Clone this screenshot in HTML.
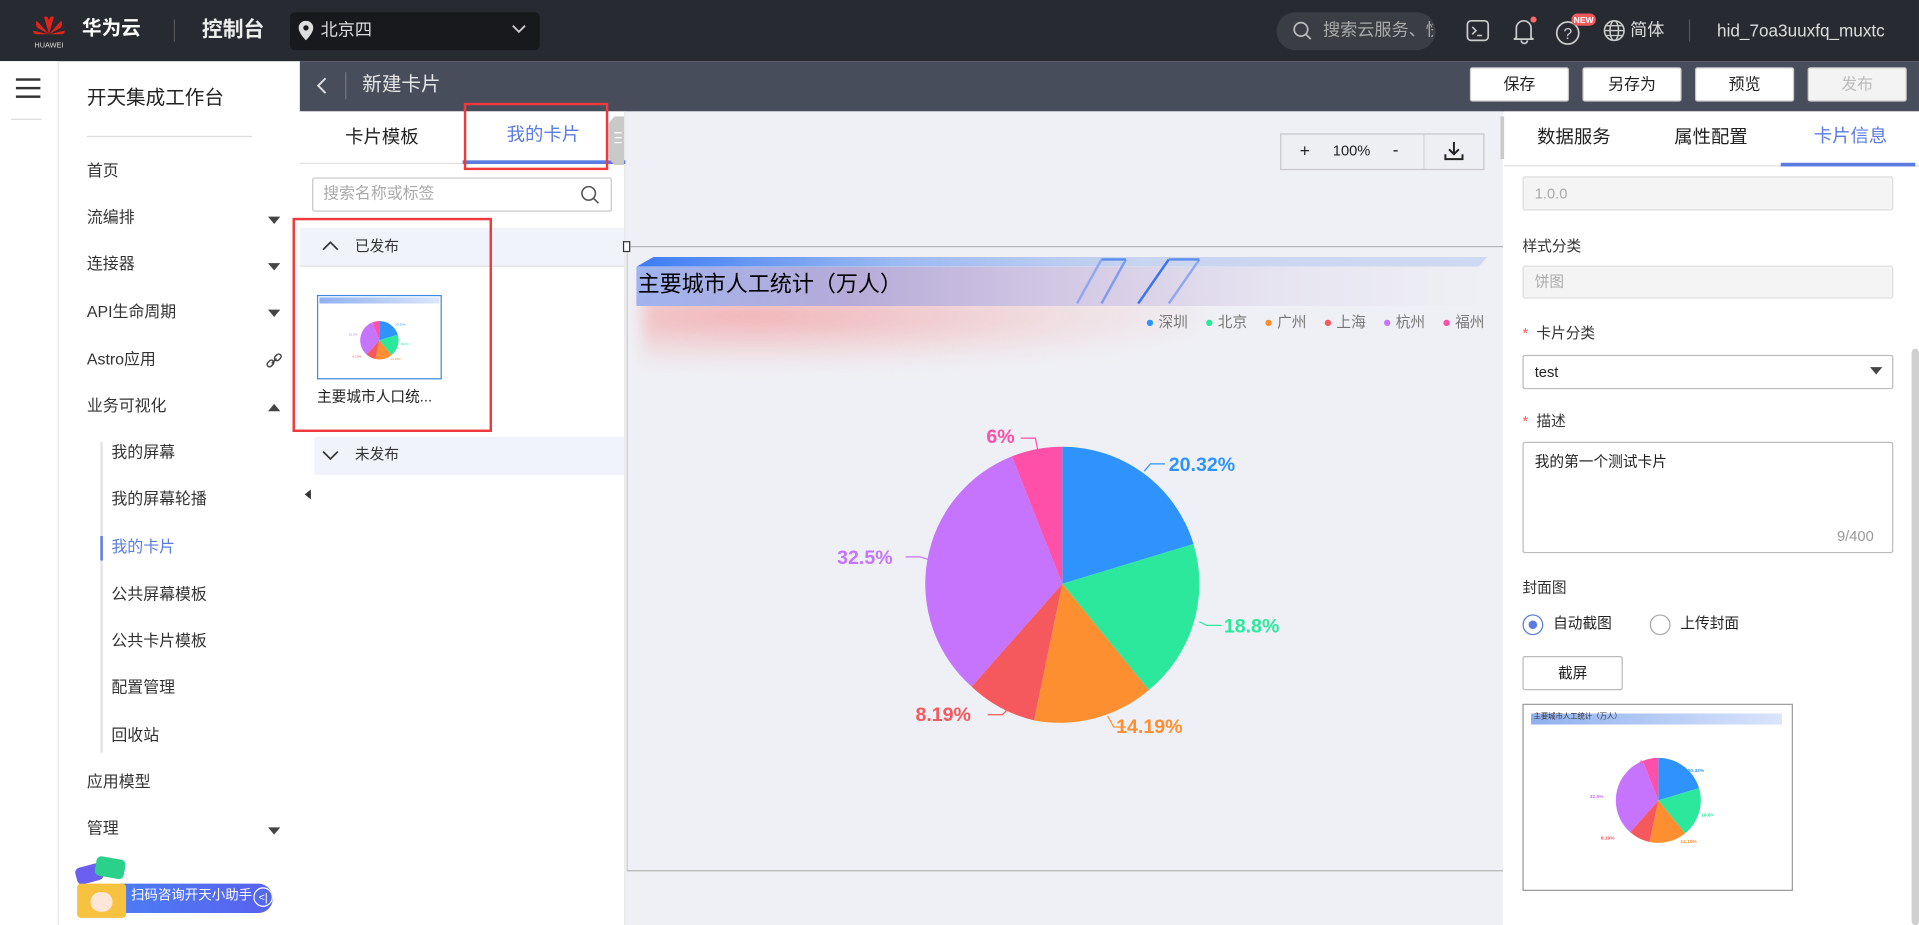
<!DOCTYPE html>
<html><head><meta charset="utf-8">
<style>
*{margin:0;padding:0;box-sizing:border-box}
html,body{width:1919px;height:925px;overflow:hidden;background:#fff}
body{font-family:"Liberation Sans","Noto Sans CJK SC",sans-serif;color:#333;line-height:1.15}
#s{position:absolute;left:0;top:0;width:1568px;height:756px;transform:scale(1.22385);transform-origin:0 0;overflow:hidden}
.a{position:absolute}
.t{position:absolute;white-space:nowrap}
.btn{position:absolute;top:55px;width:81px;height:28px;background:#fff;border:1px solid #ccc;border-radius:2px;font-size:13px;text-align:center;line-height:26px;color:#222}
.mi{position:absolute;left:71px;font-size:13px;color:#333;top:0}
.si{position:absolute;left:91px;font-size:13px;color:#333}
.arr{position:absolute;left:219px;width:0;height:0;border-left:5px solid transparent;border-right:5px solid transparent;border-top:6px solid #444}
.lbl{position:absolute;left:1244px;font-size:12px;color:#333}
.inp{position:absolute;left:1244px;width:303px;border:1px solid #ccc;border-radius:2px;font-size:12px;padding-left:9px}
</style></head><body>
<div id="s">
<!-- header -->
<div class="a" style="left:0;top:0;width:1568px;height:50px;background:#272a31"></div>
<svg class="a" style="left:25px;top:11px" width="30" height="30" viewBox="0 0 30 30">
<g fill="#e2231a"><path d="M15 17 L11 3 Q14 1 15 6Z"/><path d="M15 17 L19 3 Q16 1 15 6Z"/><path d="M15 17 L5 6 Q3 9 6 12Z"/><path d="M15 17 L25 6 Q27 9 24 12Z"/><path d="M15 17 L2 14 Q2 17 5 17Z"/><path d="M15 17 L28 14 Q28 17 25 17Z"/></g>
<text x="15" y="28" fill="#ddd" font-size="6" text-anchor="middle" font-family="Liberation Sans">HUAWEI</text></svg>
<div class="t" style="left:67px;top:15px;font-size:16px;font-weight:bold;color:#fff">华为云</div>
<div class="a" style="left:142px;top:16px;width:1px;height:18px;background:#555"></div>
<div class="t" style="left:165px;top:15px;font-size:17px;font-weight:bold;color:#eee">控制台</div>
<div class="a" style="left:237px;top:10px;width:204px;height:31px;background:#18191c;border-radius:4px"></div>
<svg class="a" style="left:244px;top:17px" width="12" height="16" viewBox="0 0 12 16"><path d="M6 0C2.7 0 0 2.6 0 5.8 0 10 6 16 6 16s6-6 6-10.2C12 2.6 9.3 0 6 0zm0 8a2.2 2.2 0 110-4.4A2.2 2.2 0 016 8z" fill="#ddd"/></svg>
<div class="t" style="left:262px;top:16px;font-size:14px;color:#ddd">北京四</div>
<svg class="a" style="left:418px;top:20px" width="12" height="8"><path d="M1 1l5 5 5-5" stroke="#ccc" stroke-width="1.5" fill="none"/></svg>
<div class="a" style="left:1043px;top:10px;width:130px;height:31px;background:#3a3d44;border-radius:16px"></div>
<svg class="a" style="left:1056px;top:17px" width="16" height="16"><circle cx="7" cy="7" r="5.5" stroke="#bbb" stroke-width="1.4" fill="none"/><path d="M11 11l4 4" stroke="#bbb" stroke-width="1.4"/></svg>
<div class="t" style="left:1081px;top:16px;font-size:14px;color:#aaa;width:90px;overflow:hidden">搜索云服务、快</div>
<svg class="a" style="left:1198px;top:15px" width="20" height="20"><rect x="1" y="2" width="17" height="16" rx="3" stroke="#ccc" stroke-width="1.4" fill="none"/><path d="M5 7l3 3-3 3M9 14h4" stroke="#ccc" stroke-width="1.3" fill="none"/></svg>
<svg class="a" style="left:1235px;top:12px" width="22" height="26"><path d="M4 19V11a6 6 0 0112 0v8l2 1H2z M8 21a2.5 2.5 0 005 0" stroke="#ccc" stroke-width="1.4" fill="none"/><circle cx="18" cy="4" r="2.5" fill="#f66"/></svg>
<svg class="a" style="left:1270px;top:11px" width="36" height="30"><circle cx="11" cy="16" r="9" stroke="#ccc" stroke-width="1.4" fill="none"/><text x="11" y="21" fill="#ccc" font-size="13" text-anchor="middle" font-family="Liberation Sans">?</text><rect x="14" y="0" width="20" height="10" rx="5" fill="#f25a5a"/><text x="24" y="8" fill="#fff" font-size="7" font-weight="bold" text-anchor="middle" font-family="Liberation Sans">NEW</text></svg>
<svg class="a" style="left:1309px;top:15px" width="20" height="20"><circle cx="10" cy="10" r="8" stroke="#ccc" stroke-width="1.3" fill="none"/><ellipse cx="10" cy="10" rx="3.5" ry="8" stroke="#ccc" stroke-width="1.2" fill="none"/><path d="M2 10h16M3.5 6h13M3.5 14h13" stroke="#ccc" stroke-width="1.1"/></svg>
<div class="t" style="left:1332px;top:16px;font-size:14px;color:#ddd">简体</div>
<div class="a" style="left:1380px;top:16px;width:1px;height:18px;background:#555"></div>
<div class="t" style="left:1403px;top:17px;font-size:14px;color:#ddd">hid_7oa3uuxfq_muxtc</div>

<!-- left narrow -->
<div class="a" style="left:0;top:50px;width:48px;height:706px;background:#fff;border-right:1px solid #e5e5e5"></div>
<div class="a" style="left:13px;top:64px;width:20px;height:2px;background:#333;box-shadow:0 7px 0 #333,0 14px 0 #333"></div>
<div class="a" style="left:9px;top:97px;width:25px;height:1px;background:#ddd"></div>
<!-- sidebar -->
<div class="t" style="left:71px;top:72px;font-size:16px;color:#222">开天集成工作台</div>
<div class="a" style="left:71px;top:111px;width:135px;height:1px;background:#ddd"></div>
<div class="mi" style="top:133px">首页</div>
<div class="mi" style="top:171px">流编排</div><div class="arr" style="top:177px"></div>
<div class="mi" style="top:209px">连接器</div><div class="arr" style="top:215px"></div>
<div class="mi" style="top:248px">API生命周期</div><div class="arr" style="top:253px"></div>
<div class="mi" style="top:287px">Astro应用</div>
<svg class="a" style="left:217px;top:288px" width="14" height="14"><path d="M5 9l4-4" stroke="#444" stroke-width="1.3"/><rect x="1" y="7" width="6" height="4" rx="2" transform="rotate(-45 4 9)" stroke="#444" fill="none" stroke-width="1.2"/><rect x="7" y="2" width="6" height="4" rx="2" transform="rotate(-45 10 4)" stroke="#444" fill="none" stroke-width="1.2"/></svg>
<div class="mi" style="top:325px">业务可视化</div><div class="arr" style="top:330px;border-top:none;border-bottom:6px solid #444"></div>
<div class="a" style="left:82px;top:361px;width:2px;height:254px;background:#e3e3e3"></div>
<div class="a" style="left:82px;top:438px;width:2px;height:20px;background:#5a7be0"></div>
<div class="si" style="top:363px">我的屏幕</div>
<div class="si" style="top:401px">我的屏幕轮播</div>
<div class="si" style="top:440px;color:#5a7be0">我的卡片</div>
<div class="si" style="top:479px">公共屏幕模板</div>
<div class="si" style="top:517px">公共卡片模板</div>
<div class="si" style="top:555px">配置管理</div>
<div class="si" style="top:594px">回收站</div>
<div class="mi" style="top:632px">应用模型</div>
<div class="mi" style="top:670px">管理</div><div class="arr" style="top:676px"></div>
<!-- assistant -->
<div class="a" style="left:95px;top:722px;width:128px;height:24px;border-radius:4px 12px 12px 4px;background:linear-gradient(90deg,#4b7df5,#5a61ee)"></div>
<div class="t" style="left:107px;top:726px;font-size:11px;color:#fff">扫码咨询开天小助手</div>
<div class="a" style="left:207px;top:725px;width:16px;height:16px;border-radius:8px;border:1px solid #fff;background:#5468ee;color:#fff;font-size:9px;text-align:center;line-height:14px">&lt;|</div>
<div class="a" style="left:62px;top:707px;width:22px;height:14px;background:#6a5ff0;border-radius:4px;transform:rotate(-15deg)"></div>
<div class="a" style="left:78px;top:701px;width:24px;height:16px;background:#2bd08a;border-radius:4px;transform:rotate(10deg)"></div>
<div class="a" style="left:63px;top:722px;width:40px;height:28px;background:#f7c23f;border-radius:3px"></div>
<div class="a" style="left:74px;top:729px;width:18px;height:16px;background:#fde6d8;border-radius:9px"></div>

<!-- toolbar -->
<div class="a" style="left:245px;top:50px;width:1323px;height:41px;background:#474d5b"></div>
<svg class="a" style="left:257px;top:62px" width="12" height="16"><path d="M9 2L3 8l6 6" stroke="#ddd" stroke-width="1.6" fill="none"/></svg>
<div class="a" style="left:282px;top:59px;width:1px;height:22px;background:#777"></div>
<div class="t" style="left:296px;top:61px;font-size:16px;color:#e6e6e6">新建卡片</div>
<div class="btn" style="left:1201px">保存</div>
<div class="btn" style="left:1293px">另存为</div>
<div class="btn" style="left:1385px">预览</div>
<div class="btn" style="left:1477px;background:#f3f3f3;color:#bbb">发布</div>

<!-- left panel -->
<div class="a" style="left:245px;top:91px;width:266px;height:665px;background:#fff;border-right:1px solid #e6e6e6"></div>
<div class="a" style="left:245px;top:133px;width:266px;height:1px;background:#e0e0e0"></div>
<div class="t" style="left:282px;top:104px;font-size:15px;color:#222">卡片模板</div>
<div class="t" style="left:414px;top:102px;font-size:15px;color:#5a7be0">我的卡片</div>
<div class="a" style="left:378px;top:131px;width:133px;height:3px;background:#5a7be0"></div>
<div class="a" style="left:379px;top:84px;width:118px;height:55px;border:2px solid #f0393c"></div>
<div class="a" style="left:497px;top:95px;width:13px;height:40px;background:#c9c9c9;clip-path:polygon(40% 0,100% 0,100% 100%,40% 100%,0 85%,0 15%)"></div>
<div class="a" style="left:502px;top:108px;width:6px;height:1px;background:#fff;box-shadow:0 4px 0 #fff,0 8px 0 #fff"></div>
<div class="a" style="left:255px;top:145px;width:245px;height:28px;border:1px solid #c8c8c8;border-radius:2px"></div>
<div class="t" style="left:264px;top:151px;font-size:13px;color:#aaa">搜索名称或标签</div>
<svg class="a" style="left:474px;top:151px" width="16" height="16"><circle cx="7" cy="7" r="5.5" stroke="#555" stroke-width="1.3" fill="none"/><path d="M11 11l4 4" stroke="#555" stroke-width="1.3"/></svg>
<div class="a" style="left:245px;top:186px;width:265px;height:32px;background:#f1f3fa;border-bottom:1px solid #e2e2e2"></div>
<svg class="a" style="left:263px;top:196px" width="14" height="10"><path d="M1 8l6-6 6 6" stroke="#333" stroke-width="1.4" fill="none"/></svg>
<div class="t" style="left:290px;top:195px;font-size:12px;color:#333">已发布</div>
<div class="a" style="left:259px;top:241px;width:102px;height:69px;border:1px solid #3f89e0;background:#fff"></div>
<div class="a" style="left:261px;top:243px;width:98px;height:5px;background:linear-gradient(90deg,#8fb0f0,#dde7fb)"></div>
<svg class="a" style="left:280px;top:258px" width="60" height="40" viewBox="0 0 60 40"><g transform="translate(30,20) scale(0.14)"><path d="M0 0V-112A112 112 0 0 1 107.2 -32.5Z" fill="#2f93fe"/><path d="M0 0L107.2 -32.5A112 112 0 0 1 70.7 86.8Z" fill="#2ce89c"/><path d="M0 0L70.7 86.8A112 112 0 0 1 -23.1 109.6Z" fill="#fe8f30"/><path d="M0 0L-23.1 109.6A112 112 0 0 1 -74.1 84Z" fill="#f5585d"/><path d="M0 0L-74.1 84A112 112 0 0 1 -41.2 -104.1Z" fill="#c673fe"/><path d="M0 0L-41.2 -104.1A112 112 0 0 1 0 -112Z" fill="#fe50a8"/></g>
<g font-size="2.5" font-family="Liberation Sans"><text x="43" y="8" fill="#2f93fe">20.32%</text><text x="47" y="24" fill="#2ce89c">18.8%</text><text x="39" y="36" fill="#fe8f30">14.19%</text><text x="8" y="34" fill="#f5585d">8.19%</text><text x="5" y="16" fill="#c673fe">32.5%</text></g></svg>
<div class="t" style="left:259px;top:318px;font-size:12px;color:#222">主要城市人口统...</div>
<div class="a" style="left:239px;top:178px;width:163px;height:175px;border:2px solid #f0393c"></div>
<div class="a" style="left:257px;top:357px;width:253px;height:31px;background:#f1f3fa"></div>
<svg class="a" style="left:263px;top:367px" width="14" height="10"><path d="M1 2l6 6 6-6" stroke="#333" stroke-width="1.4" fill="none"/></svg>
<div class="t" style="left:290px;top:365px;font-size:12px;color:#333">未发布</div>
<div class="a" style="left:245px;top:400px;width:0;height:0;border-top:4px solid transparent;border-bottom:4px solid transparent;border-right:5px solid #333;margin-left:4px"></div>

<!-- canvas -->
<div class="a" style="left:511px;top:91px;width:717px;height:665px;background:#eff0f5"></div>
<div class="a" style="left:1046px;top:109px;width:167px;height:30px;border:1px solid #c6c6cc;background:#eeeff3"></div>
<div class="a" style="left:1163px;top:110px;width:1px;height:28px;background:#d6d6da"></div>
<div class="t" style="left:1062px;top:115px;font-size:14px;color:#222">+</div>
<div class="t" style="left:1089px;top:117px;font-size:12px;color:#222">100%</div>
<div class="t" style="left:1138px;top:114px;font-size:14px;color:#222">-</div>
<svg class="a" style="left:1179px;top:114px" width="18" height="18"><path d="M9 2v10M5 8l4 4 4-4M2 12v4h14v-4" stroke="#222" stroke-width="1.6" fill="none"/></svg>
<div class="a" style="left:1226px;top:95px;width:14px;height:35px;background:#c9c9c9;clip-path:polygon(0 0,60% 0,100% 15%,100% 85%,60% 100%,0 100%)"></div>
<div class="a" style="left:1233px;top:108px;width:5px;height:1px;background:#fff;box-shadow:0 4px 0 #fff,0 8px 0 #fff"></div>
<div class="a" style="left:512px;top:201px;width:716px;height:1px;background:#b5b5b5"></div>
<div class="a" style="left:512px;top:711px;width:716px;height:1px;background:#b5b5b5"></div>
<div class="a" style="left:512px;top:201px;width:1px;height:510px;background:#ccc"></div>
<div class="a" style="left:509px;top:197px;width:6px;height:9px;border:1px solid #333;background:#fff"></div>
<!-- glow -->
<div class="a" style="left:525px;top:240px;width:460px;height:60px;background:radial-gradient(ellipse at 20% 30%,rgba(245,120,120,.5),rgba(245,150,150,.18) 50%,rgba(239,240,245,0) 75%);filter:blur(6px)"></div>
<div class="a" style="left:520px;top:210px;width:695px;height:8px;background:linear-gradient(90deg,#3b7cf4,#9bb9f2 30%,#c9d5f0 60%,#cfd9f3);clip-path:polygon(2% 0,100% 0,99% 100%,0 100%)"></div>
<div class="a" style="left:520px;top:218px;width:695px;height:32px;background:linear-gradient(90deg,#9fb3ee,#b6abd8 25%,#d3c8e4 50%,rgba(225,220,238,.6) 75%,rgba(239,240,245,0))"></div>
<svg class="a" style="left:860px;top:210px" width="140" height="40"><g stroke-width="2" fill="none"><path d="M40 2L20 38" stroke="#8fa8f0"/><path d="M60 2L40 38" stroke="#7d9cf0"/><path d="M95 2L70 38" stroke="#3a74ee"/><path d="M120 2L95 38" stroke="#8fa8f0"/><path d="M40 2h20M95 2h25" stroke="#5b8cf0"/></g></svg>
<div class="t" style="left:521px;top:222px;font-size:18px;color:#000">主要城市人工统计（万人）</div>
<div class="t" style="left:936px;top:257px;width:277px;display:flex;justify-content:space-between;font-size:12px;color:#777">
<span><span style="color:#2f93fe">●</span> 深圳</span><span><span style="color:#2ce89c">●</span> 北京</span><span><span style="color:#fe8f30">●</span> 广州</span><span><span style="color:#f5585d">●</span> 上海</span><span><span style="color:#c673fe">●</span> 杭州</span><span><span style="color:#fe50a8">●</span> 福州</span></div>
<svg class="a" style="left:660px;top:330px" width="420" height="290" viewBox="660 330 420 290">
<path d="M868 477V365A112 112 0 0 1 975.2 444.5Z" fill="#2f93fe"/>
<path d="M868 477L975.2 444.5A112 112 0 0 1 938.7 563.8Z" fill="#2ce89c"/>
<path d="M868 477L938.7 563.8A112 112 0 0 1 844.9 588.6Z" fill="#fe8f30"/>
<path d="M868 477L844.9 588.6A112 112 0 0 1 793.9 561Z" fill="#f5585d"/>
<path d="M868 477L793.9 561A112 112 0 0 1 826.8 372.9Z" fill="#c673fe"/>
<path d="M868 477L826.8 372.9A112 112 0 0 1 868 365Z" fill="#fe50a8"/>
<g fill="none" stroke-width="1"><path d="M935 385l5-6h12" stroke="#2f93fe"/><path d="M980 508l6 3h12" stroke="#2ce89c"/><path d="M905 585l5 9h10" stroke="#fe8f30"/><path d="M825 578l-6 6h-12" stroke="#f5585d"/><path d="M758 457l-6-2h-12" stroke="#c673fe"/><path d="M848 368l-2-10h-12" stroke="#fe50a8"/></g>
<g font-family="Liberation Sans" font-weight="bold" font-size="16"><text x="955" y="385" fill="#2f93fe">20.32%</text><text x="1000" y="517" fill="#2ce89c">18.8%</text><text x="912" y="599" fill="#fe8f30">14.19%</text><text x="748" y="589" fill="#f5585d">8.19%</text><text x="684" y="461" fill="#c673fe">32.5%</text><text x="806" y="362" fill="#fe50a8">6%</text></g>
</svg>

<!-- right panel -->
<div class="a" style="left:1229px;top:91px;width:339px;height:665px;background:#fff"></div>
<div class="a" style="left:1229px;top:135px;width:339px;height:1px;background:#e0e0e0"></div>
<div class="t" style="left:1256px;top:104px;font-size:15px;color:#222">数据服务</div>
<div class="t" style="left:1368px;top:104px;font-size:15px;color:#222">属性配置</div>
<div class="t" style="left:1482px;top:103px;font-size:15px;color:#5a7be0">卡片信息</div>
<div class="a" style="left:1455px;top:133px;width:110px;height:3px;background:#5a7be0"></div>
<div class="inp" style="top:144px;height:28px;background:#f4f4f4;color:#aaa;line-height:26px;border-color:#ddd">1.0.0</div>
<div class="lbl" style="top:195px">样式分类</div>
<div class="inp" style="top:217px;height:27px;background:#f4f4f4;color:#aaa;line-height:25px;border-color:#ddd">饼图</div>
<div class="lbl" style="top:266px"><span style="color:#f55">*</span>&nbsp; 卡片分类</div>
<div class="inp" style="top:290px;height:28px;line-height:26px;color:#222;border-color:#bbb">test</div>
<div class="a" style="left:1528px;top:300px;width:0;height:0;border-left:5px solid transparent;border-right:5px solid transparent;border-top:6px solid #444"></div>
<div class="lbl" style="top:338px"><span style="color:#f55">*</span>&nbsp; 描述</div>
<div class="inp" style="top:361px;height:91px;border-color:#bbb;padding-top:9px;color:#222">我的第一个测试卡片</div>
<div class="t" style="left:1501px;top:432px;font-size:12px;color:#999">9/400</div>
<div class="lbl" style="top:474px">封面图</div>
<div class="a" style="left:1244px;top:502px;width:17px;height:17px;border-radius:50%;border:1px solid #5a7be0"></div>
<div class="a" style="left:1249px;top:507px;width:7px;height:7px;border-radius:50%;background:#5a7be0"></div>
<div class="t" style="left:1269px;top:503px;font-size:12px;color:#222">自动截图</div>
<div class="a" style="left:1348px;top:502px;width:17px;height:17px;border-radius:50%;border:1px solid #aaa"></div>
<div class="t" style="left:1373px;top:503px;font-size:12px;color:#222">上传封面</div>
<div class="a" style="left:1244px;top:536px;width:82px;height:28px;border:1px solid #bbb;border-radius:2px;font-size:12px;text-align:center;line-height:26px;color:#222">截屏</div>
<div class="a" style="left:1244px;top:575px;width:221px;height:153px;border:1px solid #999;background:#fff"></div>
<div class="a" style="left:1251px;top:583px;width:205px;height:9px;background:linear-gradient(90deg,#8fb0f0,#dbe5fb)"></div>
<div class="t" style="left:1253px;top:583px;font-size:6px;color:#333">主要城市人工统计（万人）</div>
<svg class="a" style="left:1290px;top:615px" width="110" height="80" viewBox="0 0 110 80"><g transform="translate(65,39) scale(0.31)"><path d="M0 0V-112A112 112 0 0 1 107.2 -32.5Z" fill="#2f93fe"/><path d="M0 0L107.2 -32.5A112 112 0 0 1 70.7 86.8Z" fill="#2ce89c"/><path d="M0 0L70.7 86.8A112 112 0 0 1 -23.1 109.6Z" fill="#fe8f30"/><path d="M0 0L-23.1 109.6A112 112 0 0 1 -74.1 84Z" fill="#f5585d"/><path d="M0 0L-74.1 84A112 112 0 0 1 -41.2 -104.1Z" fill="#c673fe"/><path d="M0 0L-41.2 -104.1A112 112 0 0 1 0 -112Z" fill="#fe50a8"/></g>
<g font-size="4" font-family="Liberation Sans" font-weight="bold"><text x="89" y="16" fill="#2f93fe">20.32%</text><text x="100" y="52" fill="#2ce89c">18.8%</text><text x="83" y="74" fill="#fe8f30">14.19%</text><text x="18" y="71" fill="#f5585d">8.19%</text><text x="9" y="37" fill="#c673fe">32.5%</text><text x="50" y="9" fill="#fe50a8">6%</text></g></svg>
<div class="a" style="left:1562px;top:285px;width:6px;height:471px;background:#d0d0d0;border-radius:3px"></div>
</div>
</body></html>
